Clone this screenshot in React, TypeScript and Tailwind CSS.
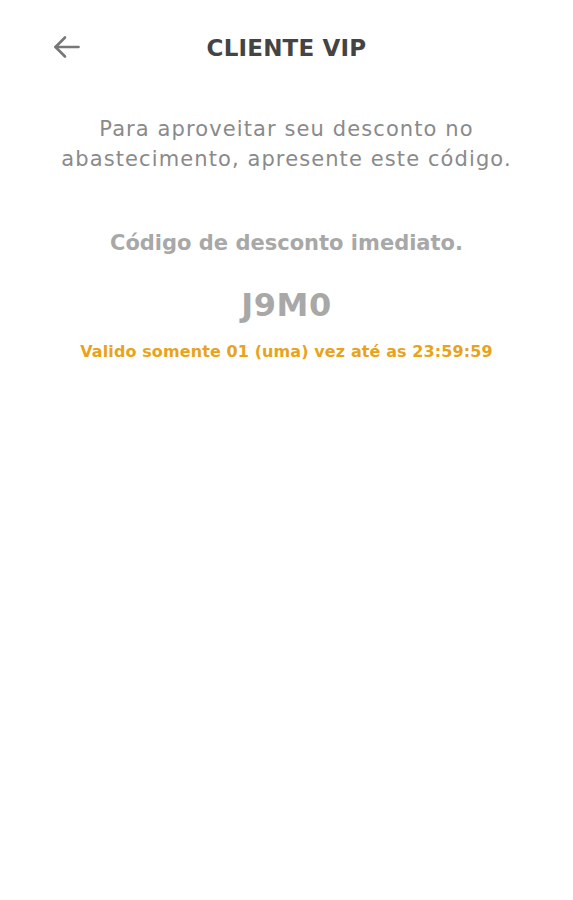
function BackArrow() {
  return (
    <svg width="28" height="24" viewBox="0 0 28 24" fill="none" stroke="currentColor" strokeWidth="2.6" strokeLinecap="round" strokeLinejoin="round">
      <path d="M2.5 12h23" />
      <path d="M12 2.5 2.5 12l9.5 9.5" />
    </svg>
  )
}

export default function App() {
  return (
    <div className="min-h-[900px] w-full bg-white font-['DejaVu_Sans',sans-serif]">
      <header className="relative flex h-[96px] items-center justify-center">
        <button className="absolute left-[53px] top-[35px] text-[#777]">
          <BackArrow />
        </button>
        <h1 className="text-[23px] font-bold tracking-[0.2px] text-[#444]">CLIENTE VIP</h1>
      </header>
      <p className="mt-[18px] text-center text-[21px] leading-[30px] tracking-[1.1px] text-[#8a8a8a]">
        Para aproveitar seu desconto no
        <br />
        abastecimento, apresente este código.
      </p>
      <div className="mt-[54px] flex flex-col items-center">
        <p className="text-[21px] font-bold text-[#a8a8a8]">Código de desconto imediato.</p>
        <p className="mt-[21px] text-[32px] font-bold tracking-[0.5px] text-[#a8a8a8]">J9M0</p>
        <p className="mt-[11px] text-[16px] font-bold tracking-[0.1px] text-[#e8a31a]">
          Valido somente 01 (uma) vez até as 23:59:59
        </p>
      </div>
    </div>
  )
}
